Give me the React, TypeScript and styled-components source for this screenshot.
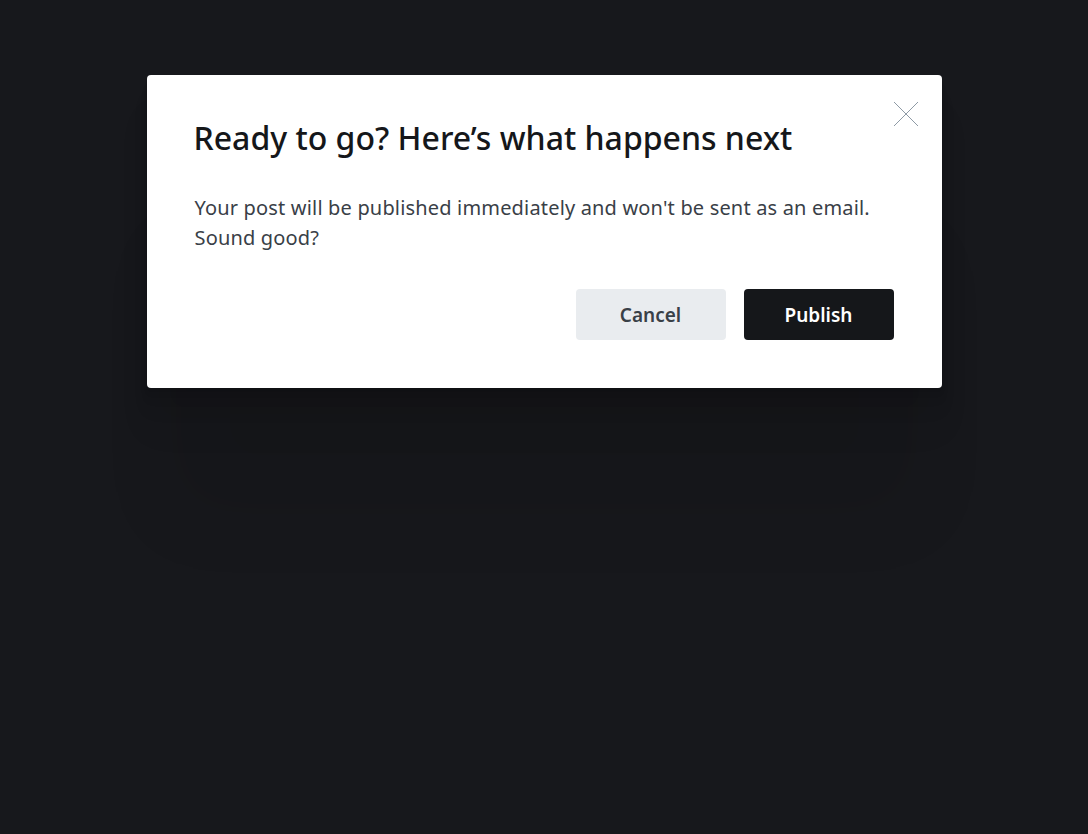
import React from "react";
import styled, { createGlobalStyle } from "styled-components";

const Global = createGlobalStyle`
  html, body { margin: 0; padding: 0; background: #17181c; }
  body { font-family: "Noto Sans", "Open Sans", sans-serif; -webkit-font-smoothing: antialiased; }
  * { box-sizing: border-box; }
`;

const Page = styled.div`
  min-height: 834px;
  background: #17181c;
  display: flex;
  flex-direction: column;
  align-items: center;
  padding-top: 75px;
`;

const Modal = styled.div`
  position: relative;
  width: 795px;
  background: #ffffff;
  border-radius: 4px;
  padding: 42px 48px 48px 47px;
  box-shadow: 0 2.8px 2.2px rgba(0, 0, 0, 0.02), 0 6.7px 5.3px rgba(0, 0, 0, 0.028),
    0 12.5px 10px rgba(0, 0, 0, 0.035), 0 22.3px 17.9px rgba(0, 0, 0, 0.042),
    0 41.8px 33.4px rgba(0, 0, 0, 0.05), 0 150px 70px -25px rgba(0, 0, 0, 0.08);
`;

const CloseButton = styled.button`
  position: absolute;
  top: 26px;
  right: 23px;
  width: 26px;
  height: 26px;
  padding: 0;
  border: 0;
  background: transparent;
  display: flex;
  align-items: center;
  justify-content: center;
  cursor: pointer;
`;

const Title = styled.h1`
  margin: 0;
  font-size: 32px;
  line-height: 42px;
  font-weight: 500;
  color: #15171a;
  letter-spacing: 0;
`;

const Body = styled.p`
  margin: 34px 0 0 1px;
  font-size: 20px;
  line-height: 30px;
  color: #394047;
  letter-spacing: 0.17px;
`;

const Actions = styled.div`
  display: flex;
  justify-content: flex-end;
  gap: 18px;
  margin-top: 36px;
`;

const Button = styled.button<{ $primary?: boolean }>`
  width: 150px;
  height: 51px;
  border: 0;
  border-radius: 4px;
  font-family: inherit;
  font-size: 19px;
  font-weight: 600;
  padding-top: 2px;
  cursor: pointer;
  background: ${(p) => (p.$primary ? "#15171a" : "#e9ecef")};
  color: ${(p) => (p.$primary ? "#ffffff" : "#394047")};
`;

export default function App() {
  return (
    <>
      <Global />
      <Page>
        <Modal>
          <CloseButton aria-label="Close">
            <svg width="26" height="26" viewBox="0 0 26 26" fill="none">
              <path d="M1 1 L25 25 M25 1 L1 25" stroke="#8e9aa5" strokeWidth="1" />
            </svg>
          </CloseButton>
          <Title>Ready to go? Here’s what happens next</Title>
          <Body>
            Your post will be published immediately and won't be sent as an email.
            <br />
            Sound good?
          </Body>
          <Actions>
            <Button>Cancel</Button>
            <Button $primary>Publish</Button>
          </Actions>
        </Modal>
      </Page>
    </>
  );
}
